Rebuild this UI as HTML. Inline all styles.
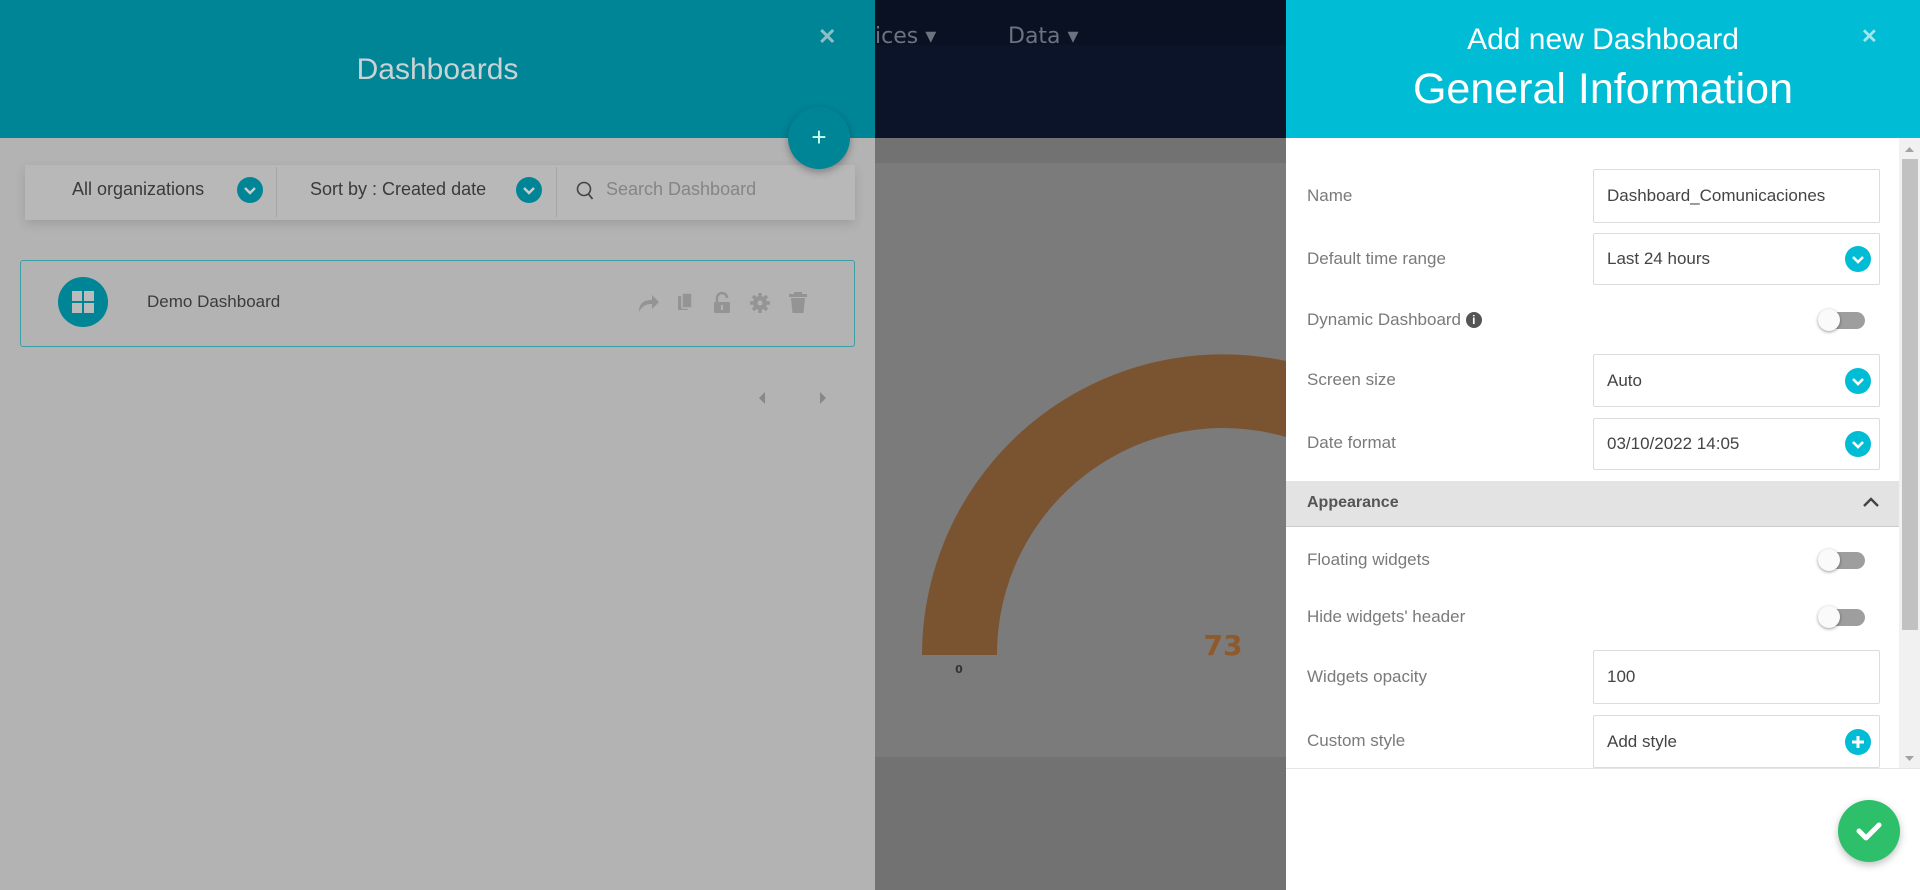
<!DOCTYPE html>
<html><head><meta charset="utf-8"><style>
*{margin:0;padding:0;box-sizing:border-box}
html,body{width:1920px;height:890px;overflow:hidden}
body{position:relative;font-family:"Liberation Sans",sans-serif;background:#727272}
.abs{position:absolute}
.lbl{position:absolute;left:1307px;font-size:17px;color:#7a7a7a;transform:translateY(-50%)}
.inp{position:absolute;left:1593px;width:287px;border:1px solid #dcdcdc;border-radius:2px;background:#fff;font-size:17px;color:#444;padding-left:13px;display:flex;align-items:center}
.chev{position:absolute;right:8px;top:50%;margin-top:-13px;width:26px;height:26px;border-radius:50%;background:#00bcd4}
.tog{position:absolute;left:1818px;width:47px;height:20px;transform:translateY(-50%)}
.tog:before{content:"";position:absolute;left:10px;top:2px;width:37px;height:17px;border-radius:9px;background:#9e9e9e}
.tog:after{content:"";position:absolute;left:0;top:-1px;width:22px;height:22px;border-radius:50%;background:#fafafa;box-shadow:0 1px 3px rgba(0,0,0,.4)}
</style></head><body>
<div class="abs" style="left:875px;top:0;width:411px;height:45px;background:#0a1122"></div>
<div class="abs" style="left:875px;top:45px;width:411px;height:93px;background:#0b1428"></div>
<div class="abs" style="left:875px;top:24px;font-size:22px;color:#6b7280;font-family:'DejaVu Sans',sans-serif">ices ▾</div>
<div class="abs" style="left:1008px;top:24px;font-size:22px;color:#6b7280;font-family:'DejaVu Sans',sans-serif">Data ▾</div>
<div class="abs" style="left:875px;top:163px;width:411px;height:594px;background:#7b7b7b"></div>
<svg class="abs" style="left:875px;top:0" width="411" height="890">
<path d="M47 655 A301 301 0 0 1 411 361 L411 437 A226 226 0 0 0 122 655 Z" fill="#7a5430"/>
<text x="84" y="673" font-size="11" font-weight="bold" fill="#333" text-anchor="middle" font-family="DejaVu Sans">0</text>
<text x="348" y="655" font-size="28" font-weight="bold" fill="#8e5a2b" text-anchor="middle" font-family="DejaVu Sans">73</text>
</svg>
<div class="abs" style="left:0;top:0;width:875px;height:890px;background:#b3b3b3"></div>
<div class="abs" style="left:0;top:0;width:875px;height:138px;background:#008596"></div>
<div class="abs" style="left:0;top:53px;width:875px;text-align:center;font-size:30px;color:#c8d3d6">Dashboards</div>
<div class="abs" style="left:818px;top:24px;font-size:22px;color:#8fbfc6;font-weight:bold">✕</div>
<div class="abs" style="left:25px;top:165px;width:830px;height:55px;background:#b8b8b8;box-shadow:0 4px 10px rgba(0,0,0,.12)"></div>
<div class="abs" style="left:72px;top:179px;font-size:18px;color:#3a3a3a">All organizations</div>
<div class="abs" style="left:237px;top:177px;width:26px;height:26px;border-radius:50%;background:#008596"><svg width="26" height="26"><path d="M8 11l5 5 5-5" stroke="#ccc" stroke-width="2.4" fill="none"/></svg></div>
<div class="abs" style="left:276px;top:167px;width:1px;height:50px;background:#a5a5a5"></div>
<div class="abs" style="left:310px;top:179px;font-size:18px;color:#3a3a3a">Sort by : Created date</div>
<div class="abs" style="left:516px;top:177px;width:26px;height:26px;border-radius:50%;background:#008596"><svg width="26" height="26"><path d="M8 11l5 5 5-5" stroke="#ccc" stroke-width="2.4" fill="none"/></svg></div>
<div class="abs" style="left:556px;top:167px;width:1px;height:50px;background:#a5a5a5"></div>
<svg class="abs" style="left:576px;top:181px" width="20" height="22"><circle cx="8" cy="8" r="6.5" stroke="#444" stroke-width="1.6" fill="none"/><path d="M12.5 13l4 5" stroke="#444" stroke-width="1.8"/></svg>
<div class="abs" style="left:606px;top:179px;font-size:18px;color:#858585">Search Dashboard</div>
<div class="abs" style="left:788px;top:107px;width:62px;height:62px;border-radius:50%;background:#008596;box-shadow:0 3px 8px rgba(0,0,0,.3);color:#cfe;font-size:26px;text-align:center;line-height:60px">+</div>
<div class="abs" style="left:20px;top:260px;width:835px;height:87px;border:1.5px solid #3e9ea6;border-radius:3px"></div>
<div class="abs" style="left:58px;top:277px;width:50px;height:50px;border-radius:50%;background:#008596"><svg width="50" height="50"><rect x="14" y="14" width="10" height="10" fill="#bbb"/><rect x="26" y="14" width="10" height="10" fill="#bbb"/><rect x="14" y="26" width="10" height="10" fill="#bbb"/><rect x="26" y="26" width="10" height="10" fill="#bbb"/></svg></div>
<div class="abs" style="left:147px;top:292px;font-size:17px;color:#3c3c3c">Demo Dashboard</div>
<svg class="abs" style="left:630px;top:290px" width="190" height="28" fill="#949494">
<path d="M9 22 C9 13 14 10 22 10 L22 5 L29 12 L22 19 L22 14 C16 14 12 16 9 22Z"/>
<rect x="48" y="6" width="10" height="14" rx="1"/><rect x="52" y="3" width="10" height="15" rx="1" stroke="#b3b3b3" stroke-width="1.5"/>
<rect x="84" y="12" width="16" height="11" rx="1"/><path d="M87 12 V8 a5 5 0 0 1 10 0" stroke="#949494" stroke-width="2.5" fill="none"/><rect x="91" y="15" width="2" height="5" fill="#b3b3b3"/>
<circle cx="130" cy="13" r="7"/><path d="M130 3v20M120 13h20M123 6l14 14M137 6l-14 14" stroke="#949494" stroke-width="3.5"/><circle cx="130" cy="13" r="2.5" fill="#b3b3b3"/>
<rect x="159" y="4" width="18" height="3"/><rect x="164" y="2" width="8" height="3"/><path d="M161 8h14l-1.5 15h-11z"/>
</svg>
<svg class="abs" style="left:756px;top:391px" width="75" height="14" fill="#888"><path d="M9 1v12l-6-6z"/><path d="M64 1v12l6-6z"/></svg>
<div class="abs" style="left:1286px;top:0;width:634px;height:890px;background:#fff"></div>
<div class="abs" style="left:1286px;top:0;width:634px;height:138px;background:#00bcd4"></div>
<div class="abs" style="left:1286px;top:23px;width:634px;text-align:center;font-size:30px;color:#fff">Add new Dashboard</div>
<div class="abs" style="left:1286px;top:65px;width:634px;text-align:center;font-size:43px;color:#fff">General Information</div>
<div class="abs" style="left:1861px;top:24px;font-size:20px;color:#a5e6ee;font-weight:bold">✕</div>
<div class="abs" style="left:1899px;top:138px;width:21px;height:630px;background:#f1f1f1"></div>
<div class="abs" style="left:1902px;top:159px;width:16px;height:471px;background:#c1c1c1"></div>
<svg class="abs" style="left:1902px;top:142px" width="16" height="626" fill="#a3a3a3"><path d="M3 10h9l-4.5-5z"/><path d="M3 614h9l-4.5 5z"/></svg>
<div class="lbl" style="top:196px">Name</div>
<div class="inp" style="top:169px;height:54px">Dashboard_Comunicaciones</div>
<div class="lbl" style="top:259px">Default time range</div>
<div class="inp" style="top:233px;height:52px">Last 24 hours<div class="chev"><svg width="26" height="26"><path d="M8 11l5 5 5-5" stroke="#fff" stroke-width="2.6" fill="none"/></svg></div></div>
<div class="lbl" style="top:320px">Dynamic Dashboard <span style="display:inline-block;width:16px;height:16px;border-radius:50%;background:#555;color:#fff;font-size:12px;font-weight:bold;text-align:center;line-height:16px;vertical-align:1px">i</span></div>
<div class="tog" style="top:320px"></div>
<div class="lbl" style="top:380px">Screen size</div>
<div class="inp" style="top:354px;height:53px">Auto<div class="chev"><svg width="26" height="26"><path d="M8 11l5 5 5-5" stroke="#fff" stroke-width="2.6" fill="none"/></svg></div></div>
<div class="lbl" style="top:443px">Date format</div>
<div class="inp" style="top:418px;height:52px">03/10/2022 14:05<div class="chev"><svg width="26" height="26"><path d="M8 11l5 5 5-5" stroke="#fff" stroke-width="2.6" fill="none"/></svg></div></div>
<div class="abs" style="left:1286px;top:481px;width:613px;height:46px;background:#e3e3e3;border-bottom:1px solid #ccc"></div>
<div class="lbl" style="top:503px;font-weight:bold;color:#555;font-size:16px">Appearance</div>
<svg class="abs" style="left:1862px;top:495px" width="18" height="14"><path d="M2 11l7-7 7 7" stroke="#444" stroke-width="2.4" fill="none"/></svg>
<div class="lbl" style="top:560px">Floating widgets</div>
<div class="tog" style="top:560px"></div>
<div class="lbl" style="top:617px">Hide widgets' header</div>
<div class="tog" style="top:617px"></div>
<div class="lbl" style="top:677px">Widgets opacity</div>
<div class="inp" style="top:650px;height:54px">100</div>
<div class="lbl" style="top:741px">Custom style</div>
<div class="inp" style="top:715px;height:53px">Add style<div class="chev"><svg width="26" height="26"><path d="M13 7v12M7 13h12" stroke="#fff" stroke-width="3"/></svg></div></div>
<div class="abs" style="left:1286px;top:768px;width:634px;height:122px;background:#fff;border-top:1px solid #e6e6e6"></div>
<div class="abs" style="left:1838px;top:800px;width:62px;height:62px;border-radius:50%;background:#2ebf6a;box-shadow:0 3px 8px rgba(0,0,0,.25)"><svg width="62" height="62"><path d="M21 31l7 7 13-13" stroke="#fff" stroke-width="5" fill="none" stroke-linecap="round" stroke-linejoin="round"/></svg></div>
</body></html>
